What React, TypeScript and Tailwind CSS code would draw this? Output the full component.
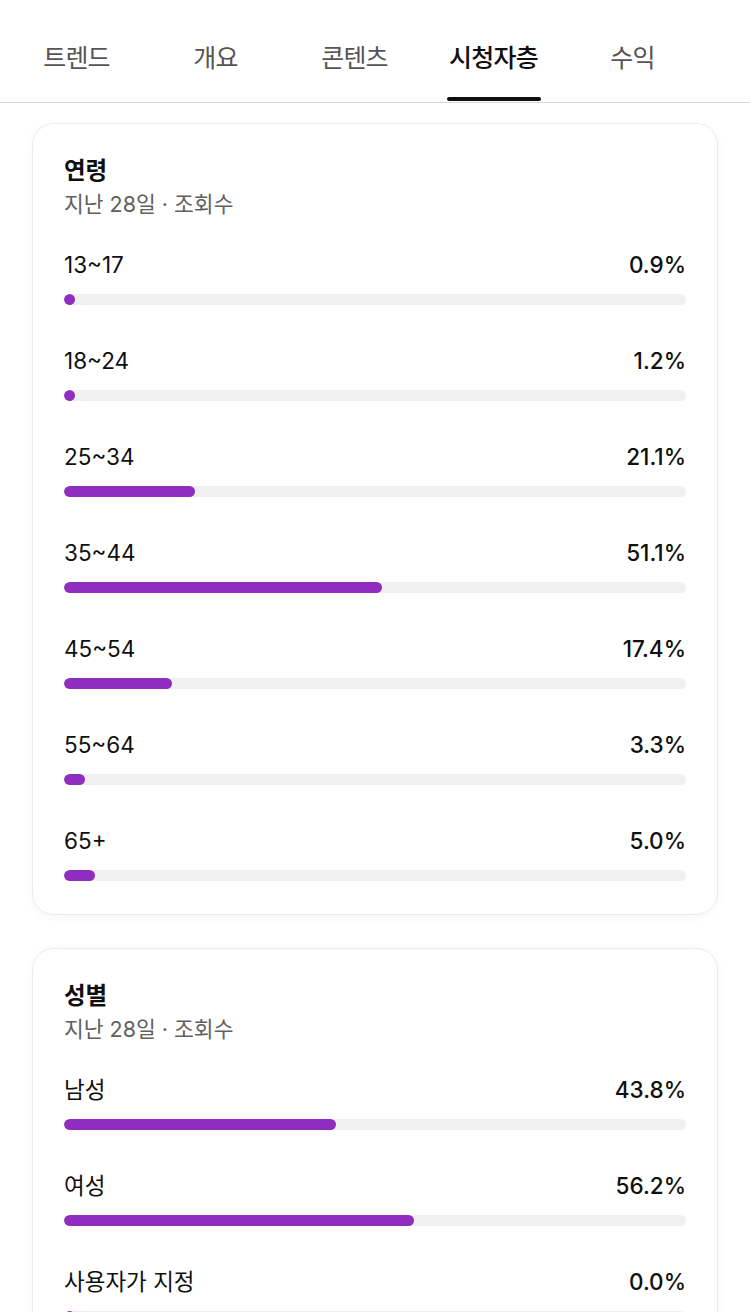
import React from "react";

const tabs = ["트렌드", "개요", "콘텐츠", "시청자층", "수익"];

type Row = { label: string; value: number };

const ageRows: Row[] = [
  { label: "13~17", value: 0.9 },
  { label: "18~24", value: 1.2 },
  { label: "25~34", value: 21.1 },
  { label: "35~44", value: 51.1 },
  { label: "45~54", value: 17.4 },
  { label: "55~64", value: 3.3 },
  { label: "65+", value: 5.0 },
];

const genderRows: Row[] = [
  { label: "남성", value: 43.8 },
  { label: "여성", value: 56.2 },
  { label: "사용자가 지정", value: 0.0 },
];

function StatRow({ row, first }: { row: Row; first: boolean }) {
  return (
    <div className={first ? "mt-[33px]" : "mt-[42px]"}>
      <div className="flex items-center justify-between h-[28px]">
        <span className="text-[22.5px] text-[#0f0f0f]">{row.label}</span>
        <span className="text-[22.5px] font-medium text-[#0f0f0f]">{row.value.toFixed(1)}%</span>
      </div>
      <div className="mt-[15px] h-[11px] w-full rounded-full bg-[#f0f0f0] overflow-hidden">
        <div
          className="h-full rounded-full bg-[#8e2dc0] min-w-[11px]"
          style={{ width: `${row.value}%` }}
        />
      </div>
    </div>
  );
}

function Card({ title, rows }: { title: string; rows: Row[] }) {
  return (
    <section className="mx-[32px] rounded-[22px] border border-[#ececec] bg-white px-[31px] pt-[33px] pb-[33px] shadow-[0_2px_10px_rgba(0,0,0,0.04)]">
      <h2 className="h-[28px] leading-[28px] text-[23.5px] font-bold text-[#0f0f0f]">{title}</h2>
      <p className="mt-[5px] h-[28px] leading-[28px] text-[21.5px] text-[#606060]">지난 28일 · 조회수</p>
      {rows.map((r, i) => (
        <StatRow key={r.label} row={r} first={i === 0} />
      ))}
    </section>
  );
}

export default function App() {
  return (
    <div
      className="w-[750px] h-[1312px] overflow-hidden bg-white"
      style={{ fontFamily: '"Inter", "Noto Sans CJK KR", sans-serif' }}
    >
      {/* Tabs */}
      <nav className="flex h-[103px] border-b-[1.5px] border-[#d9d9d9] pl-[7px]">
        {tabs.map((t) => {
          const active = t === "시청자층";
          return (
            <div key={t} className="relative flex w-[139px] items-center justify-center pt-[15px]">
              <span
                className={
                  active
                    ? "text-[25px] font-medium text-[#0f0f0f] tracking-[-0.8px]"
                    : "text-[25px] text-[#555555] tracking-[-0.8px]"
                }
              >
                {t}
              </span>
              {active && (
                <span className="absolute bottom-[1px] left-1/2 h-[4px] w-[94px] -translate-x-1/2 rounded-full bg-[#0f0f0f]" />
              )}
            </div>
          );
        })}
      </nav>

      <div className="pt-[20px] flex flex-col gap-[33px]">
        <Card title="연령" rows={ageRows} />
        <Card title="성별" rows={genderRows} />
      </div>
    </div>
  );
}
